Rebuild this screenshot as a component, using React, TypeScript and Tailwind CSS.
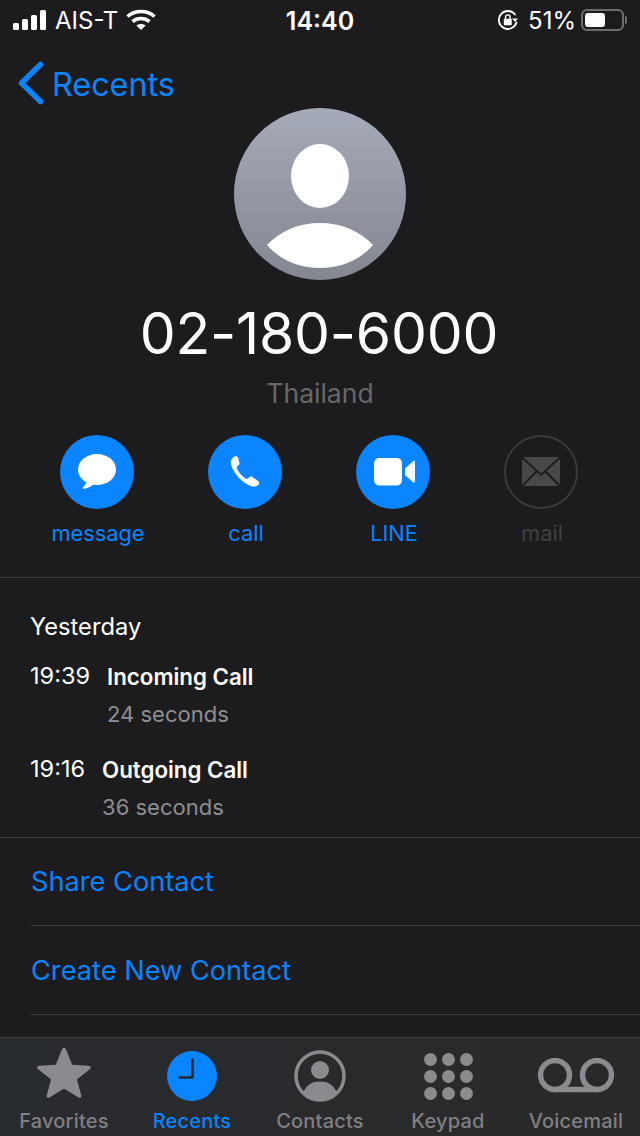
const font = "font-['Inter','Liberation_Sans',sans-serif]";

const SignalIcon = () => (
  <svg width="34" height="20" viewBox="0 0 34 20" fill="#fff">
    <rect x="0" y="13" width="6" height="7" rx="1.5" />
    <rect x="9" y="9" width="6" height="11" rx="1.5" />
    <rect x="18" y="5" width="6" height="15" rx="1.5" />
    <rect x="27" y="0" width="6" height="20" rx="1.5" />
  </svg>
);

const WifiIcon = () => (
  <svg width="30" height="22" viewBox="0 0 30 22" fill="none" stroke="#fff" strokeWidth="3.6">
    <path d="M1.5 7.5C9 .8 21 .8 28.5 7.5" />
    <path d="M6.5 12.5c4.8-4 12.2-4 17 0" />
    <path d="M15 21l-4.6-4.6c2.6-2 6.6-2 9.2 0L15 21z" fill="#fff" stroke="none" />
  </svg>
);

const OrientationLock = () => (
  <svg width="22" height="22" viewBox="0 0 22 22" fill="none">
    <path d="M19.5 13.5A9 9 0 1 1 18 5.5" stroke="#fff" strokeWidth="1.8" strokeLinecap="round" />
    <path d="M16 9.5h6l-3 3.6z" fill="#fff" transform="translate(-1 0)" />
    <rect x="6.8" y="9.8" width="8" height="6.4" rx="1" fill="#fff" />
    <path d="M8.5 10V8.2a2.3 2.3 0 0 1 4.6 0V10" stroke="#fff" strokeWidth="1.4" />
  </svg>
);

const MessageIcon = () => (
  <svg width="38" height="36" viewBox="1 0 38 36" fill="#fff">
    <ellipse cx="20" cy="15.5" rx="19" ry="15.5" />
    <path d="M10 25c0 3-1.500 6-4 8.500-.6.800.2 1.300 1 1.200 4-.5 7.500-2.200 10-5z" />
  </svg>
);

const PhoneIcon = () => (
  <svg width="32" height="32" viewBox="0 0 32 32" fill="#fff">
    <path d="M2.200 4.200c-.8 2-.3 5 1.500 8.500 2 4 5 8 8.500 11.200 3.500 3 7.500 5.800 11 6.500 2.300.5 4.600.1 6-1.500.9-1 1.200-2 .7-3-.3-.6-.8-1-1.500-1.500l-4.700-3.200c-1-.7-2.100-.8-3-.1l-1.700 1.300c-.8.600-1.600.5-2.400 0-1.800-1.100-3.600-2.700-5.200-4.500-1.500-1.700-2.800-3.600-3.500-5.300-.4-.9-.3-1.600.4-2.300l1.500-1.300c.9-.8 1-1.900.4-3L9.200 2C8.600 1 8 .5 7.200.3 6-.1 3.400 1.300 2.200 4.200z" />
  </svg>
);

const VideoIcon = () => (
  <svg className="translate-x-[2px]" width="42" height="28" viewBox="0 0 42 28" fill="#fff">
    <rect x="0" y="0" width="28" height="27.500" rx="5" />
    <path d="M31 10.500 39 3.200c.9-.8 2-.3 2 1V23.300c0 1.300-1.100 1.800-2 1L31 17z" />
  </svg>
);

const MailIcon = () => (
  <svg width="38" height="30" viewBox="0 0 38 30" fill="#48484a">
    <path d="M1 0h36L19 16.500z" />
    <path d="M0 1.800v26L13.500 14z" />
    <path d="M38 1.800v26L24.500 14z" />
    <path d="M15 15.500l4 3.600 4-3.600L36.500 29h-35z" />
  </svg>
);

const ActionButton = ({ label, children, disabled }: { label: string; children: React.ReactNode; disabled?: boolean }) => (
  <div className="flex w-[148px] flex-col items-center">
    {disabled ? (
      <div className="flex h-[74px] w-[74px] items-center justify-center rounded-full border-2 border-[#3a3a3c]">{children}</div>
    ) : (
      <div className="flex h-[74px] w-[74px] items-center justify-center rounded-full bg-[#0a84ff]">{children}</div>
    )}
    <span className={disabled ? "mt-[11px] pl-[2px] text-[21.800px] leading-[26px] text-[#414143]" : "mt-[11px] pl-[2px] text-[21.800px] leading-[26px] text-[#0a84ff]"}>{label}</span>
  </div>
);

const CallRow = ({ time, kind, duration }: { time: string; kind: string; duration: string }) => (
  <div className="flex items-start gap-[17px]">
    <span className="text-[23.500px] leading-[30px] text-white">{time}</span>
    <div className="flex flex-col">
      <span className="pt-[1px] text-[22.300px] leading-[30px] font-semibold text-white">{kind}</span>
      <span className="mt-[8px] text-[22px] leading-[28px] text-[#8e8e93]">{duration}</span>
    </div>
  </div>
);

const Tab = ({ label, active, children }: { label: string; active?: boolean; children: React.ReactNode }) => (
  <div className="flex w-[128px] flex-col items-center">
    <div className="flex h-[71px] items-center justify-center pt-[5px]">{children}</div>
    <span className={active ? "text-[20px] leading-[24px] font-medium tracking-[0.2px] text-[#0a84ff]" : "text-[20px] leading-[24px] font-medium tracking-[0.2px] text-[#808082]"}>{label}</span>
  </div>
);

export default function App() {
  return (
    <div className={`${font} relative flex h-[1136px] w-[640px] flex-col overflow-hidden bg-[#1c1c1e] text-white`}>
      {/* status bar */}
      <div className="grid h-[40px] grid-cols-3 items-center pr-[13px] pl-[13px]">
        <div className="flex items-center gap-[8px]">
          <SignalIcon />
          <span className="pt-[2px] text-[24px] leading-[26px]">AIS-T</span>
          <WifiIcon />
        </div>
        <span className="pt-[2px] text-center text-[25px] leading-[26px] font-semibold">14:40</span>
        <div className="flex items-center justify-end gap-[9px]">
          <OrientationLock />
          <span className="pt-[2px] text-[24px] leading-[26px]">51%</span>
          <div className="-ml-[4px] flex items-center gap-[1px]">
            <div className="flex h-[22px] w-[43px] items-center rounded-[6px] border-2 border-[#6e6e70] p-[2px]">
              <div className="h-[14px] w-[20px] rounded-[3px] bg-white" />
            </div>
            <div className="h-[8px] w-[2px] rounded-r-sm bg-[#6e6e70]" />
          </div>
        </div>
      </div>

      {/* nav */}
      <div className="flex h-[68px] items-start pt-[21px] pl-[18px] text-[#0a84ff]">
        <svg width="26" height="44" viewBox="0 0 26 44" fill="none" stroke="#0a84ff" strokeWidth="5.500" strokeLinecap="round" strokeLinejoin="round">
          <path d="M22.500 3.500 3.500 22l19 18.500" />
        </svg>
        <span className="ml-[8px] text-[32.300px] leading-[48px]">Recents</span>
      </div>

      {/* avatar */}
      <div className="flex flex-col items-center">
        <div className="h-[172px] w-[172px] overflow-hidden rounded-full bg-gradient-to-b from-[#a6abb9] to-[#838790]">
          <svg width="172" height="172" viewBox="0 0 172 172" fill="#fff">
            <ellipse cx="86" cy="68" rx="29" ry="32" />
            <path d="M33 137c13-14 32-22 53-22s40 8 53 22c-13 15-32 23-53 23s-40-8-53-23z" />
          </svg>
        </div>
        <h1 className="mt-[20px] pr-[2px] text-[57px] leading-[68px] font-normal tracking-[-0.2px]">02-180-6000</h1>
        <span className="mt-[9px] text-[26.500px] leading-[32px] text-[#68686b]">Thailand</span>
      </div>

      {/* actions */}
      <div className="mt-[26px] flex pl-[23px]">
        <ActionButton label="message"><MessageIcon /></ActionButton>
        <ActionButton label="call"><PhoneIcon /></ActionButton>
        <ActionButton label="LINE"><VideoIcon /></ActionButton>
        <ActionButton label="mail" disabled><MailIcon /></ActionButton>
      </div>

      <div className="mt-[31px] h-px bg-[#3a3a3c]" />

      {/* call details */}
      <div className="flex flex-col pt-[34px] pl-[30px]">
        <span className="text-[23.700px] leading-[30px]">Yesterday</span>
        <div className="mt-[19px] flex flex-col">
          <div className="h-[93px]">
            <CallRow time="19:39" kind="Incoming Call" duration="24 seconds" />
          </div>
          <div className="h-[84px]">
            <CallRow time="19:16" kind="Outgoing Call" duration="36 seconds" />
          </div>
        </div>
      </div>

      <div className="mt-[-1px] h-px bg-[#3a3a3c]" />

      {/* links */}
      <div className="flex flex-col pl-[30px] text-[#0a84ff]">
        <div className="flex h-[88px] items-center border-b border-[#3a3a3c] pt-[2px] pl-[1px] text-[27.200px]">Share Contact</div>
        <div className="flex h-[89px] items-center border-b border-[#3a3a3c] pt-[2px] pl-[1px] text-[27.200px]">Create New Contact</div>
      </div>

      {/* tab bar */}
      <div className="absolute right-0 bottom-0 left-0 flex h-[99px] border-t border-[#3f3f41] bg-gradient-to-r from-[#282b30] to-[#292929]">
        <Tab label="Favorites">
          <svg className="-translate-y-[2px]" width="56" height="52" viewBox="0 0 56 52" fill="#8a8b8e">
            <path d="M28 0c1 0 1.800.6 2.200 1.700l6 15 16.200 1c2.600.2 3.300 1.900 1.300 3.500L41 31.400l4.200 15.800c.6 2.300-.9 3.400-2.900 2.100L28 40.700 13.700 49.300c-2 1.300-3.500.2-2.900-2.100L15 31.400 2.300 21.200C.3 19.600 1 17.900 3.600 17.700l16.200-1 6-15C26.200.6 27 0 28 0z" />
          </svg>
        </Tab>
        <Tab label="Recents" active>
          <svg width="50" height="50" viewBox="0 0 50 50">
            <circle cx="25" cy="25" r="25" fill="#0a84ff" />
            <path d="M25.500 8.500v18H12.500" fill="none" stroke="#23272e" strokeWidth="2.500" strokeLinecap="round" strokeLinejoin="round" />
          </svg>
        </Tab>
        <Tab label="Contacts">
          <svg width="52" height="52" viewBox="0 0 52 52">
            <circle cx="26" cy="26" r="24" fill="none" stroke="#8a8b8e" strokeWidth="3.500" />
            <circle cx="26" cy="20" r="9" fill="#8a8b8e" />
            <path d="M9.500 42c3-7.500 9-10.500 16.500-10.500S39.500 34.500 42.500 42C38 47 32 49.500 26 49.500S14 47 9.500 42z" fill="#8a8b8e" />
          </svg>
        </Tab>
        <Tab label="Keypad">
          <div className="grid grid-cols-3 gap-x-[5px] gap-y-[4px]">
            {Array.from({ length: 9 }).map((_, i) => (
              <div key={i} className="h-[13px] w-[13px] rounded-full bg-[#8a8b8e]" />
            ))}
          </div>
        </Tab>
        <Tab label="Voicemail">
          <svg width="76" height="36" viewBox="0 0 76 36" fill="none" stroke="#8a8b8e" strokeWidth="5.500">
            <circle cx="17" cy="17" r="14.500" />
            <circle cx="59" cy="17" r="14.500" />
            <path d="M17 31.500h42" />
          </svg>
        </Tab>
      </div>
    </div>
  );
}
